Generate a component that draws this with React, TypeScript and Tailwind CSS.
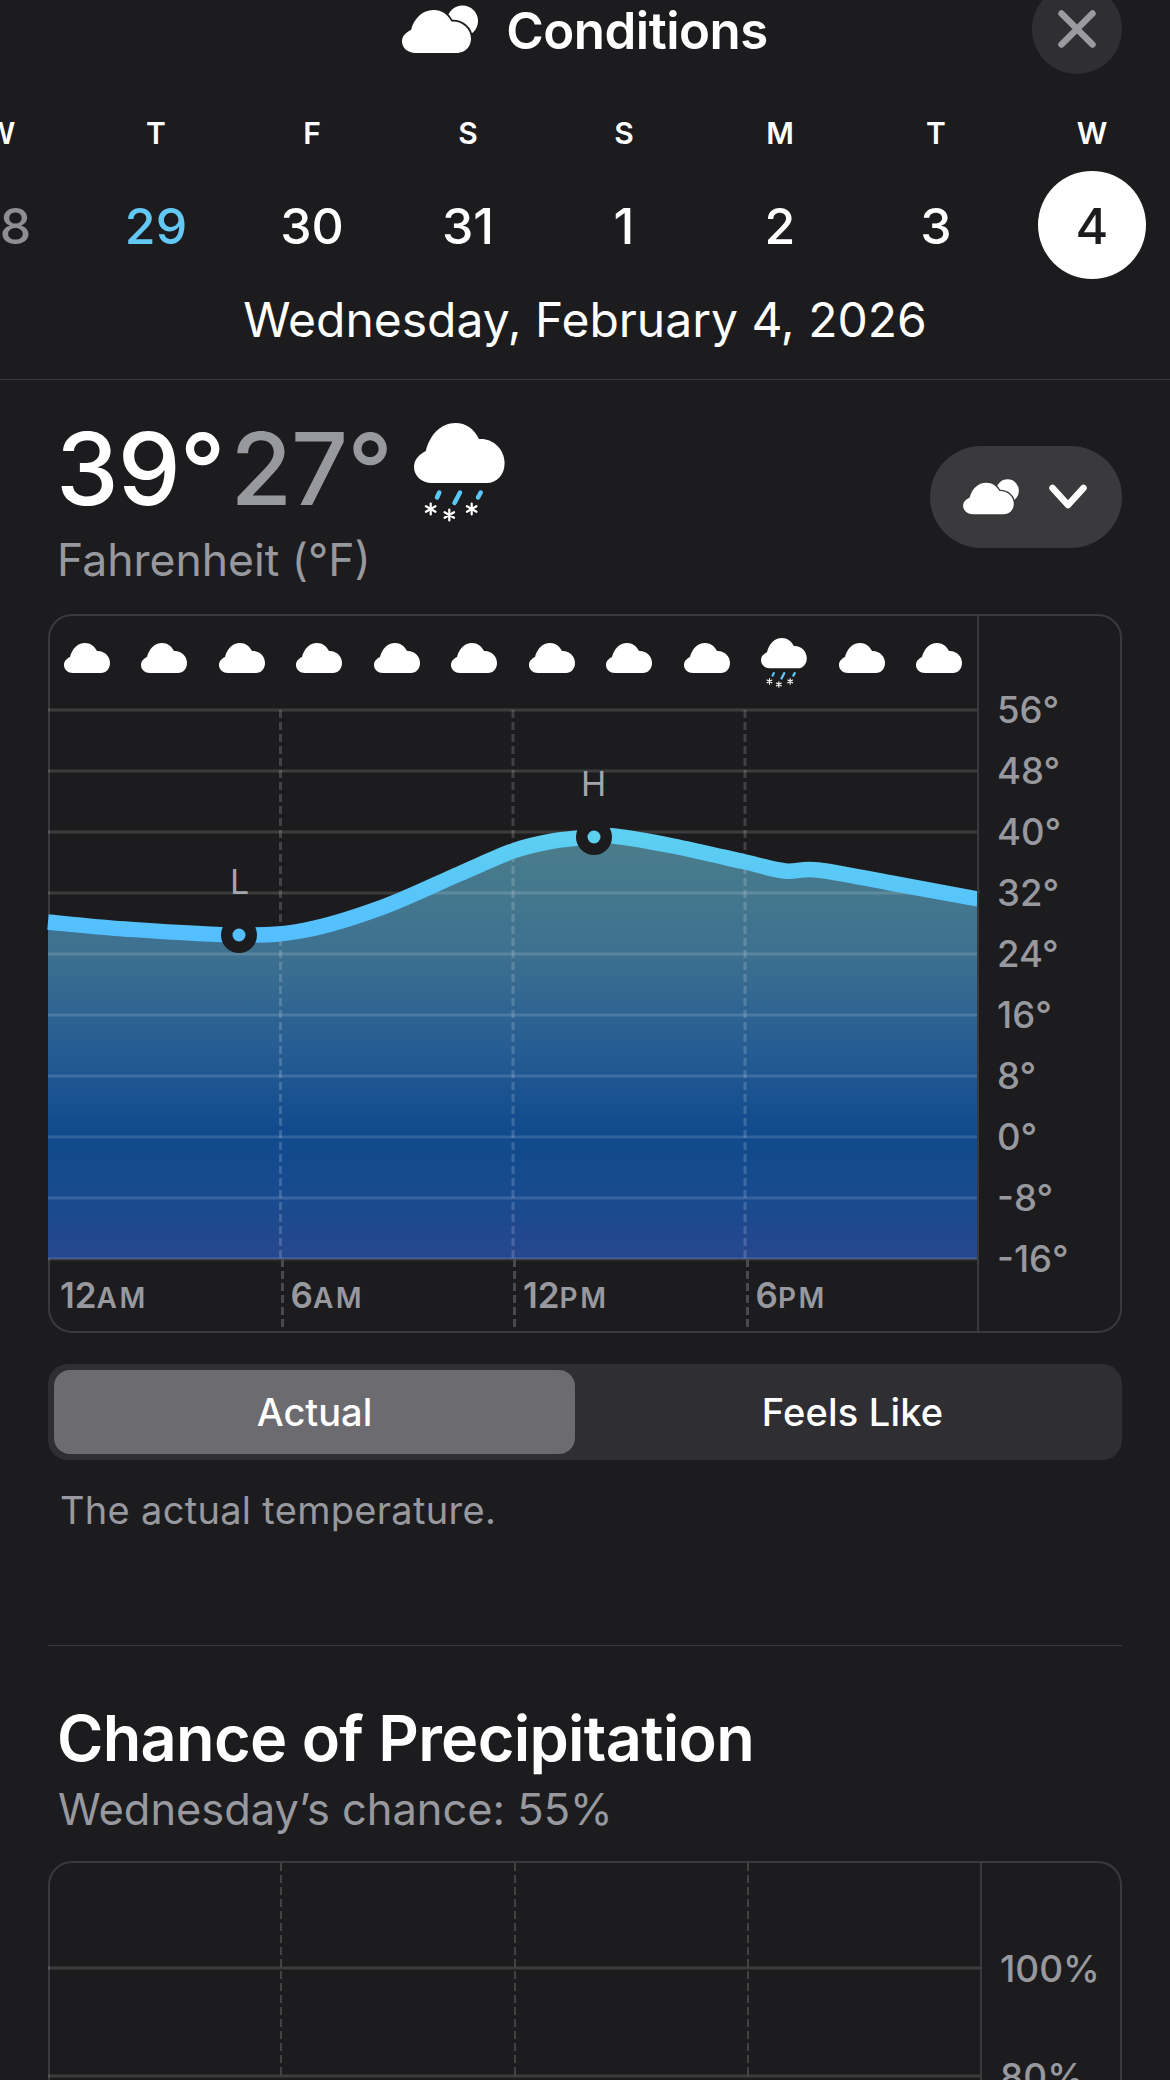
const CLOUD = "M9 30C4 30 0 26.5 0 22C0 18 3 15.5 6 14C8 6 13.5 0 21 0C26.5 0 30.5 3 33 8C40 7.5 46 13 46 20C46 26 42 30 37 30Z";

const days = [
  { d: "W", n: "28", cls: "text-[#8e8e93]" },
  { d: "T", n: "29", cls: "text-[#64c8f5]" },
  { d: "F", n: "30", cls: "text-white" },
  { d: "S", n: "31", cls: "text-white" },
  { d: "S", n: "1", cls: "text-white" },
  { d: "M", n: "2", cls: "text-white" },
  { d: "T", n: "3", cls: "text-white" },
  { d: "W", n: "4", cls: "text-[#1c1c1e] bg-white rounded-full" },
];

const tempLabels = ["56°", "48°", "40°", "32°", "24°", "16°", "8°", "0°", "-8°", "-16°"];
const hours = [
  ["12", "AM"],
  ["6", "AM"],
  ["12", "PM"],
  ["6", "PM"],
];

const curve: [number, number][] = [
  [0, 212], [77, 219], [191, 225], [258, 220], [335, 197], [411, 164], [465, 141],
  [505, 131], [546, 127], [566, 126], [625, 136], [697, 152], [737, 161], [770, 160], [843, 173], [930, 189],
];

// catmull-rom through the points, good enough for the temperature line
function smooth(pts: [number, number][]) {
  let d = `M${pts[0][0]} ${pts[0][1]}`;
  for (let i = 0; i < pts.length - 1; i++) {
    const p0 = pts[Math.max(i - 1, 0)];
    const p1 = pts[i];
    const p2 = pts[i + 1];
    const p3 = pts[Math.min(i + 2, pts.length - 1)];
    d += `C${p1[0] + (p2[0] - p0[0]) / 6} ${p1[1] + (p2[1] - p0[1]) / 6} ${p2[0] - (p3[0] - p1[0]) / 6} ${p2[1] - (p3[1] - p1[1]) / 6} ${p2[0]} ${p2[1]}`;
  }
  return d;
}

function Cloud({ className }: { className?: string }) {
  return (
    <svg viewBox="0 0 46 30" className={className}>
      <path d={CLOUD} fill="#fff" />
    </svg>
  );
}

function Flake({ x, y, r }: { x: number; y: number; r: number }) {
  const dx = r * 0.866;
  const dy = r * 0.5;
  return (
    <path
      d={`M${x} ${y - r}V${y + r}M${x - dx} ${y - dy}L${x + dx} ${y + dy}M${x - dx} ${y + dy}L${x + dx} ${y - dy}`}
      stroke="#fff"
      strokeWidth="2.2"
      strokeLinecap="round"
    />
  );
}

function SnowCloud({ className }: { className?: string }) {
  return (
    <svg viewBox="0 0 91 99" className={className}>
      <path d={CLOUD} fill="#fff" transform="scale(1.97 2)" />
      <g stroke="#5ac8fa" strokeWidth="4.5" strokeLinecap="round">
        <path d="M25.3 69.5L23 74.5" />
        <path d="M46 69.5L40.5 80" />
        <path d="M66.7 69.5L64 74.5" />
      </g>
      <Flake x={16.7} y={86} r={5.5} />
      <Flake x={35.3} y={92} r={5.5} />
      <Flake x={57.7} y={86} r={5.5} />
    </svg>
  );
}

function CloudMoon({ ring, className }: { ring: string; className?: string }) {
  return (
    <svg viewBox="0 0 76 49" className={className}>
      <circle cx="60.5" cy="16" r="15.5" fill="#fff" />
      <path
        d={CLOUD}
        fill="#fff"
        stroke={ring}
        strokeWidth="2.4"
        paintOrder="stroke"
        transform="translate(0 5) scale(1.5 1.43)"
      />
    </svg>
  );
}

function DashLine() {
  return (
    <div className="w-[3px] shrink-0 self-stretch bg-[repeating-linear-gradient(to_bottom,#4a4a4d_0,#4a4a4d_8px,transparent_8px,transparent_12px)]" />
  );
}

function TempChart() {
  const line = smooth(curve);
  return (
    <svg width="930" height="549" viewBox="0 0 930 549" className="block overflow-visible">
      <defs>
        <linearGradient id="fill" gradientUnits="userSpaceOnUse" x1="0" y1="126" x2="0" y2="549">
          <stop offset="0.03" stopColor="#4a7c8c" />
          <stop offset="0.27" stopColor="#3e7190" />
          <stop offset="0.51" stopColor="#255c93" />
          <stop offset="0.71" stopColor="#104a8d" />
          <stop offset="0.86" stopColor="#194a8f" />
          <stop offset="1" stopColor="#27478e" />
        </linearGradient>
        <linearGradient id="stroke" gradientUnits="userSpaceOnUse" x1="0" y1="126" x2="0" y2="225">
          <stop offset="0" stopColor="#5dcff0" />
          <stop offset="1" stopColor="#54bfff" />
        </linearGradient>
      </defs>
      <path d={`${line}V549H0Z`} fill="url(#fill)" />
      {[0, 61, 122, 183, 244, 305, 366, 427, 488, 549].map((y) => (
        <line key={y} x1="0" x2="930" y1={y} y2={y} stroke="#fff" strokeOpacity="0.14" strokeWidth="3" />
      ))}
      {[232.5, 465, 697].map((x) => (
        <line key={x} x1={x} x2={x} y1="0" y2="549" stroke="#fff" strokeOpacity="0.17" strokeWidth="3" strokeDasharray="8 4" />
      ))}
      <path d={line} fill="none" stroke="url(#stroke)" strokeWidth="15.5" />
      <circle cx="191" cy="225" r="18" fill="#1c1c1e" />
      <circle cx="191" cy="225" r="6.5" fill="#54bfff" />
      <circle cx="546" cy="127" r="18" fill="#1c1c1e" />
      <circle cx="546" cy="127" r="6.5" fill="#5dcff0" />
    </svg>
  );
}

export default function App() {
  return (
    <div className="relative h-[2080px] w-[1170px] overflow-hidden bg-[#1c1c1e] font-[Inter,sans-serif] text-white">
      {/* header */}
      <div className="relative flex h-[60px] items-center justify-center gap-[28px]">
        <CloudMoon ring="#1c1c1e" className="mt-[-2px] h-[49px] w-[76px]" />
        <h1 className="text-[51px] leading-none font-semibold tracking-[-0.5px]">Conditions</h1>
        <button className="absolute top-[-16px] left-[1032px] flex h-[90px] w-[90px] items-center justify-center rounded-full bg-[#2f2f33]">
          <svg width="38" height="38" viewBox="0 0 38 38">
            <path d="M3.5 3.5L34.5 34.5M34.5 3.5L3.5 34.5" stroke="#9a9aa0" strokeWidth="6.5" strokeLinecap="round" />
          </svg>
        </button>
      </div>

      {/* week strip */}
      <div className="ml-[-78px] grid w-[1248px] grid-cols-8 pt-[53px]">
        {days.map((day, i) => (
          <div key={i} className="flex h-[40px] items-center justify-center text-[30px] font-semibold">
            {day.d}
          </div>
        ))}
      </div>
      <div className="ml-[-78px] grid w-[1248px] grid-cols-8 pt-[18px]">
        {days.map((day, i) => (
          <div key={i} className="flex h-[108px] items-center justify-center">
            <span className={`flex h-[108px] w-[108px] items-center justify-center pt-[3px] text-[50px] font-medium ${day.cls}`}>
              {day.n}
            </span>
          </div>
        ))}
      </div>
      <div className="border-b border-[#3a3a3c] pt-[11px] pb-[29px] text-center text-[48px] leading-[60px]">
        Wednesday, February 4, 2026
      </div>

      <div className="px-[48px]">
        {/* temperature summary */}
        <div className="flex h-[234px] items-start justify-between">
          <div className="pt-[39px] pl-[8px]">
            <div className="flex items-start">
              <span className="text-[100px] leading-[100px] font-medium tracking-[-1px]">39°</span>
              <span className="ml-[6px] text-[100px] leading-[100px] font-medium tracking-[-1px] text-[#98989f]">27°</span>
              <SnowCloud className="mt-[4px] ml-[22px] h-[99px] w-[91px]" />
            </div>
            <div className="mt-[13px] pl-[1px] text-[44.5px] leading-[50px] text-[#98989f]">Fahrenheit (°F)</div>
          </div>
          <div className="mt-[66px] flex h-[102px] w-[192px] items-center gap-[30px] rounded-full bg-[#3a3a3c] pl-[33px]">
            <CloudMoon ring="#3a3a3c" className="h-[36px] w-[56px]" />
            <svg width="38" height="26" viewBox="0 0 38 26">
              <path d="M3.5 4L19 21L34.5 4" fill="none" stroke="#fff" strokeWidth="6.5" strokeLinecap="round" strokeLinejoin="round" />
            </svg>
          </div>
        </div>

        {/* temperature chart */}
        <div className="relative flex h-[719px] rounded-[24px] border-2 border-[#3a3a3c]">
          <div className="ml-[-2px] w-[930px] shrink-0">
            <div className="grid h-[94px] grid-cols-12">
              {Array.from({ length: 12 }).map((_, i) => (
                <div key={i} className="flex justify-center">
                  {i === 9 ? (
                    <SnowCloud className="mt-[22px] h-[50px] w-[46px]" />
                  ) : (
                    <Cloud className="mt-[27px] h-[30px] w-[46px]" />
                  )}
                </div>
              ))}
            </div>
            <TempChart />
            <div className="grid h-[72px] grid-cols-4">
              {hours.map(([n, ap], i) => (
                <div key={i} className="flex items-center font-semibold text-[#98989f]">
                  {i > 0 && <DashLine />}
                  <span className={`text-[35px] leading-none ${i === 0 ? "pl-[12px]" : "pl-[7px]"}`}>
                    {n}
                    <span className="text-[28px] tracking-[2.5px]">{ap}</span>
                  </span>
                </div>
              ))}
            </div>
          </div>
          <div className="ml-[-1px] w-[2px] shrink-0 bg-[#3a3a3c]" />
          <div className="pt-[64px] pl-[18px]">
            {tempLabels.map((t) => (
              <div key={t} className="h-[61px] text-[36.5px] leading-[61px] font-medium text-[#98989f]">
                {t}
              </div>
            ))}
          </div>
          <span className="absolute top-[151px] left-[531px] text-[34px] leading-none text-[#a5a5ab]">H</span>
          <span className="absolute top-[249px] left-[180px] text-[34px] leading-none text-[#a5a5ab]">L</span>
        </div>

        {/* actual / feels like */}
        <div className="mt-[31px] flex h-[96px] rounded-[20px] bg-[#2e2e33] p-[6px]">
          <div className="flex w-[521px] items-center justify-center rounded-[16px] bg-[#6b6b70] text-[38px] font-medium">
            Actual
          </div>
          <div className="flex flex-1 items-center justify-center pl-[14px] text-[38px] font-medium tracking-[0.2px]">
            Feels Like
          </div>
        </div>
        <p className="mt-[28px] pl-[12px] text-[38px] leading-[44px] tracking-[0.3px] text-[#98989f]">
          The actual temperature.
        </p>
        <div className="mt-[113px] h-px bg-[#3a3a3c]" />

        {/* chance of precipitation */}
        <h2 className="mt-[56px] pl-[9px] text-[63px] leading-[72px] font-semibold tracking-[-0.7px]">
          Chance of Precipitation
        </h2>
        <p className="mt-[10px] pl-[10px] text-[43.4px] leading-[50px] text-[#98989f]">Wednesday’s chance: 55%</p>
        <div className="mt-[27px] flex h-[300px] rounded-t-[24px] border-2 border-b-0 border-[#3a3a3c]">
          <div className="ml-[-2px] w-[933px] shrink-0">
            <svg width="933" height="216" viewBox="0 0 933 216" className="block">
              {[105, 213].map((y) => (
                <line key={y} x1="0" x2="933" y1={y} y2={y} stroke="#fff" strokeOpacity="0.14" strokeWidth="3" />
              ))}
              {[233, 467, 700].map((x) => (
                <line key={x} x1={x} x2={x} y1="0" y2="216" stroke="#fff" strokeOpacity="0.17" strokeWidth="2" strokeDasharray="8 4" />
              ))}
            </svg>
          </div>
          <div className="ml-[-1px] w-[2px] shrink-0 bg-[#3a3a3c]" />
          <div className="pt-[52px] pl-[18px]">
            {["100%", "80%"].map((t) => (
              <div key={t} className="h-[108px] text-[37px] leading-[108px] font-medium text-[#98989f]">
                {t}
              </div>
            ))}
          </div>
        </div>
      </div>
    </div>
  );
}
